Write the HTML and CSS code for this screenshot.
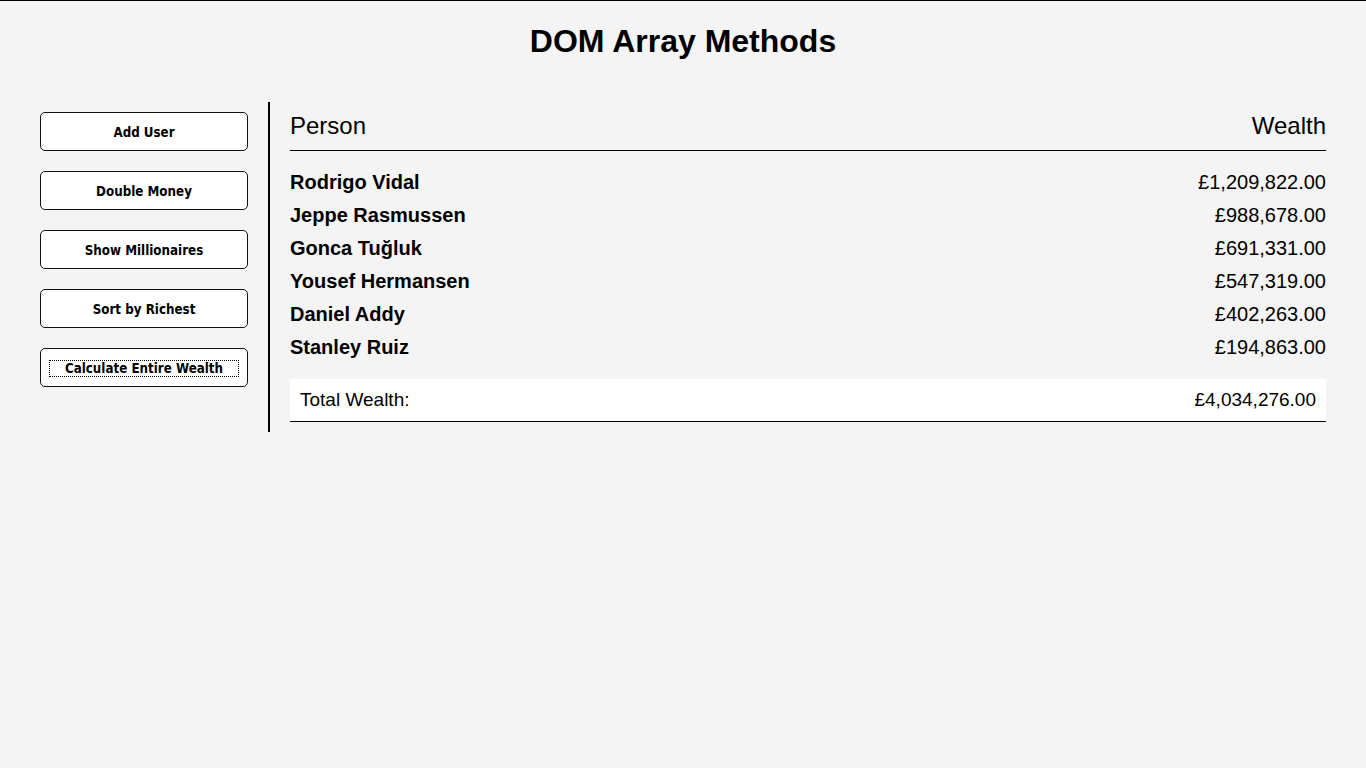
FILE: index.html
```html
<!DOCTYPE html>
<html lang="en">
<head>
<meta charset="UTF-8">
<title>DOM Array Methods</title>
<link rel="stylesheet" href="styles.css">
</head>
<body>
  <h1 class="title">DOM Array Methods</h1>
  <div class="container">
    <aside class="sidebar">
      <button class="btn"><span class="btn-label">Add User</span></button>
      <button class="btn"><span class="btn-label">Double Money</span></button>
      <button class="btn"><span class="btn-label">Show Millionaires</span></button>
      <button class="btn"><span class="btn-label">Sort by Richest</span></button>
      <button class="btn"><span class="btn-label focused">Calculate Entire Wealth</span></button>
    </aside>
    <main class="main">
      <h2 class="head-row"><span>Person</span><span>Wealth</span></h2>
      <div class="list">
        <div class="person"><strong>Rodrigo Vidal</strong><span>£1,209,822.00</span></div>
        <div class="person"><strong>Jeppe Rasmussen</strong><span>£988,678.00</span></div>
        <div class="person"><strong>Gonca Tuğluk</strong><span>£691,331.00</span></div>
        <div class="person"><strong>Yousef Hermansen</strong><span>£547,319.00</span></div>
        <div class="person"><strong>Daniel Addy</strong><span>£402,263.00</span></div>
        <div class="person"><strong>Stanley Ruiz</strong><span>£194,863.00</span></div>
      </div>
      <div class="total"><span>Total Wealth:</span><strong class="total-value">£4,034,276.00</strong></div>
    </main>
  </div>
</body>
</html>
```

FILE: styles.css
```css
* {
  box-sizing: border-box;
}

html, body {
  margin: 0;
  padding: 0;
}

body {
  background: #f4f4f4;
  border-top: 1px solid #000;
  font-family: "Liberation Sans", Arial, sans-serif;
  color: #000;
  min-height: 768px;
}

.title {
  font-size: 32px;
  font-weight: bold;
  text-align: center;
  margin: 22px 0 0;
  line-height: 37px;
}

.container {
  display: flex;
  margin: 42px 20px 0;
}

.sidebar {
  width: 250px;
  flex: 0 0 250px;
  padding: 10px 20px;
  border-right: 2px solid #000;
  display: flex;
  flex-direction: column;
  gap: 20px;
}

.btn {
  width: 208px;
  height: 39px;
  background: #fff;
  border: 1px solid #111;
  border-radius: 5px;
  padding: 1px 8px 0;
  font-family: "DejaVu Sans Condensed", "DejaVu Sans", sans-serif;
  font-stretch: condensed;
  font-weight: bold;
  font-size: 13.25px;
  color: #000;
  display: flex;
  align-items: center;
  justify-content: center;
}

.btn-label {
  display: block;
  width: 100%;
  line-height: 15px;
  border: 1px dotted transparent;
  text-align: center;
}

.btn-label.focused {
  border-color: #000;
}

.main {
  flex: 1;
  padding: 10px 20px;
}

.head-row {
  display: flex;
  justify-content: space-between;
  font-size: 24px;
  font-weight: normal;
  line-height: 28px;
  margin: 0;
  padding-bottom: 10px;
  border-bottom: 1px solid #000;
}

.list {
  padding: 15px 0;
}

.person {
  display: flex;
  justify-content: space-between;
  align-items: center;
  height: 33px;
  font-size: 20px;
}

.person strong {
  font-weight: bold;
}

.total {
  display: flex;
  justify-content: space-between;
  background: #fff;
  border-bottom: 1px solid #000;
  padding: 10px;
  font-size: 19px;
  line-height: 22px;
}

.total-value {
  font-weight: normal;
}
```
